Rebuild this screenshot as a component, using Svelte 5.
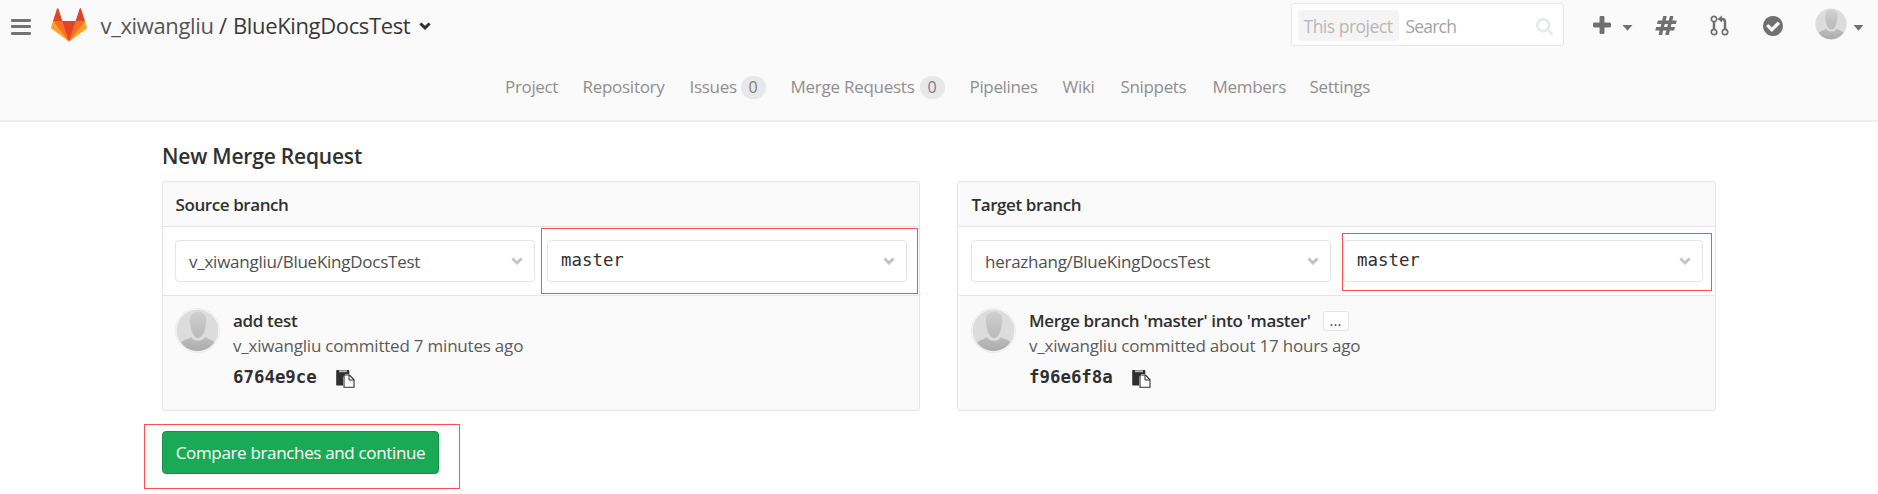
<script>
  const nav = [
    { label: 'Project', w: 52.5, ls: -0.34 },
    { label: 'Repository', w: 82, ls: -0.28 },
    { label: 'Issues', w: 46, ls: -0.3, count: 0 },
    { label: 'Merge Requests', w: 124, ls: -0.26, count: 0 },
    { label: 'Pipelines', w: 68, ls: -0.34 },
    { label: 'Wiki', w: 33, ls: -0.3 },
    { label: 'Snippets', w: 67, ls: -0.34 },
    { label: 'Members', w: 72, ls: -0.3 },
    { label: 'Settings', w: 62, ls: -0.32 }
  ];

  const panels = [
    {
      title: 'Source branch', project: 'v_xiwangliu/BlueKingDocsTest', branch: 'master',
      commit: 'add test', expandable: false, meta: 'v_xiwangliu committed 7 minutes ago',
      sha: '6764e9ce', mark: 'mark-source'
    },
    {
      title: 'Target branch', project: 'herazhang/BlueKingDocsTest', branch: 'master',
      commit: "Merge branch 'master' into 'master'", expandable: true,
      meta: 'v_xiwangliu committed about 17 hours ago', sha: 'f96e6f8a', mark: 'mark-target'
    }
  ];
</script>

{#snippet person()}
  <svg class="person" viewBox="0 0 40 40">
    <defs>
      <clipPath id="round"><circle cx="20" cy="20" r="19" /></clipPath>
      <linearGradient id="head" x1="0" y1="0" x2="0" y2="1"><stop offset="0" stop-color="#cfcfcf" /><stop offset="1" stop-color="#b9b9b9" /></linearGradient>
      <linearGradient id="body" x1="0" y1="0" x2="0" y2="1"><stop offset="0" stop-color="#bdbdbd" /><stop offset="1" stop-color="#aaaaaa" /></linearGradient>
    </defs>
    <circle cx="20" cy="20" r="19.5" fill="#dcdcdc" />
    <g clip-path="url(#round)">
      <path fill="url(#body)" d="M4 32c2-3 7-4 10-6 1.500 2.500 3.500 3.500 6.500 3.500S25.500 28.500 27 26c3 2 8 3 10 6v8H4z" />
      <path fill="url(#head)" d="M20.500 2.500c5 0 7.600 3.300 7.600 8 0 7-2.800 16.500-7.600 16.500S12.900 17.500 12.900 10.500c0-4.700 2.600-8 7.600-8z" />
    </g>
  </svg>
{/snippet}

{#snippet chevron(cls)}
  <svg class={cls} viewBox="0 0 12 8"><path d="M1.400 1.500L6 5.900l4.600-4.400" fill="none" stroke="currentColor" stroke-width="2.900" /></svg>
{/snippet}

{#snippet caret()}
  <svg class="caret" viewBox="0 0 11 6"><path d="M.5 0h10L5.500 5.800z" fill="currentColor" /></svg>
{/snippet}

<div class="page">
  <header>
    <div class="bar">
      <div class="burger"><i></i><i></i><i></i></div>
      <svg class="logo" viewBox="0 0 36 36">
        <path fill="#e24329" d="M2 14l9.380 9v-9l-4-12.280c-.205-.632-1.176-.632-1.380 0z" />
        <path fill="#e24329" d="M34 14l-9.380 9v-9l4-12.280c.205-.632 1.176-.632 1.380 0z" />
        <path fill="#e24329" d="M18 34.380L3 14h30z" />
        <path fill="#fc6d26" d="M18 34.380L11.380 14H2l4 11z" />
        <path fill="#fc6d26" d="M18 34.380L24.620 14H34l-4 11z" />
        <path fill="#fca326" d="M2 14L.1 20.160c-.18.565 0 1.200.5 1.560l17.420 12.660z" />
        <path fill="#fca326" d="M34 14l1.900 6.160c.18.565 0 1.200-.5 1.560L18 34.380z" />
      </svg>
      <div class="name"><span>v_xiwangliu</span> <em>/</em> BlueKingDocsTest</div>
      {@render chevron('name-chevron')}
      <div class="search">
        <span class="scope">This project</span>
        <span class="hint">Search</span>
        <svg viewBox="64 128 1664 1664"><path fill="currentColor" d="M1216 832q0-185-131.500-316.500t-316.500-131.500-316.500 131.500-131.500 316.500 131.500 316.500 316.500 131.500 316.500-131.500 131.500-316.500zm512 832q0 52-38 90t-90 38q-54 0-90-38l-343-342q-179 124-399 124-143 0-273.500-55.500t-225-150-150-225-55.500-273.500 55.500-273.500 150-225 225-150 273.500-55.500 273.500 55.500 225 150 150 225 55.500 273.500q0 220-124 399l343 343q37 37 37 90z" /></svg>
      </div>
      <svg class="plus" viewBox="192 128 1408 1408"><path fill="currentColor" d="M1600 736v192q0 40-28 68t-68 28h-416v416q0 40-28 68t-68 28h-192q-40 0-68-28t-28-68v-416h-416q-40 0-68-28t-28-68v-192q0-40 28-68t68-28h416v-416q0-40 28-68t68-28h192q40 0 68 28t28 68v416h416q40 0 68 28t28 68z" /></svg>
      {@render caret()}
      <svg class="hash" viewBox="0 128 1792 1536"><path fill="currentColor" d="M991 1024l64-256h-254l-64 256h254zm768-504l-56 224q-7 24-31 24h-327l-64 256h311q15 0 25 12 10 14 6 28l-56 224q-5 24-31 24h-327l-81 328q-7 24-31 24h-224q-16 0-26-12-9-12-6-28l78-312h-254l-81 328q-7 24-31 24h-225q-15 0-25-12-9-12-6-28l78-312h-311q-15 0-25-12-9-12-6-28l56-224q7-24 31-24h327l64-256h-311q-15 0-25-12-10-14-6-28l56-224q5-24 31-24h327l81-328q7-24 32-24h224q15 0 25 12 9 12 6 28l-78 312h254l81-328q7-24 32-24h224q15 0 25 12 9 12 6 28l-78 312h311q15 0 25 12 9 12 6 28z" /></svg>
      <svg class="merge" viewBox="0 0 19 21" fill="none" stroke="currentColor">
        <circle cx="4" cy="4" r="2.700" stroke-width="1.700" /><circle cx="4" cy="17" r="2.700" stroke-width="1.700" /><circle cx="15" cy="17" r="2.700" stroke-width="1.700" />
        <path stroke-width="2.500" d="M4 6.500v8M10.500 4H12q3 0 3 3v7.500" /><path d="M7.500 4L12 .5v7z" fill="currentColor" stroke="none" />
      </svg>
      <svg class="done" viewBox="128 128 1536 1536"><path fill="currentColor" d="M1412 734q0-28-18-46l-91-90q-19-19-45-19t-45 19l-408 407-226-226q-19-19-45-19t-45 19l-91 90q-18 18-18 46 0 27 18 45l362 362q19 19 45 19 27 0 46-19l543-543q18-18 18-45zm252 162q0 209-103 385.500t-279.500 279.500-385.500 103-385.500-103-279.500-279.500-103-385.500 103-385.500 279.500-279.500 385.500-103 385.500 103 279.500 279.500 103 385.500z" /></svg>
      <div class="me">{@render person()}</div>
      {@render caret()}
    </div>
    <nav>
      {#each nav as n}
        <div class="item">
          <span style="width:{n.w}px;letter-spacing:{n.ls}px">{n.label}</span>
          {#if n.count !== undefined}<b>{n.count}</b>{/if}
        </div>
      {/each}
    </nav>
  </header>

  <main>
    <h1>New Merge Request</h1>
    <div class="panels">
      {#each panels as p}
        <section>
          <h2>{p.title}</h2>
          <div class="pickers">
            <div class="select"><span>{p.project}</span>{@render chevron('chev')}</div>
            <div class="select mono"><span>{p.branch}</span>{@render chevron('chev')}</div>
            <div class="mark {p.mark}"></div>
          </div>
          <div class="commit">
            <div class="face">{@render person()}</div>
            <div class="info">
              <div class="msg">
                <span>{p.commit}</span>
                {#if p.expandable}<span class="more">...</span>{/if}
              </div>
              <div class="meta">{p.meta}</div>
              <div class="sha">
                <span>{p.sha}</span>
                <svg viewBox="0 0 19 19">
                  <path fill="currentColor" d="M1 1h11.500q.8 0 .8.800V5H9.500L7 8v8.500H1q-.8 0-.8-.8V1.800Q.2 1 1 1z" />
                  <path fill="#bbb" d="M3 1.300h8v1.900H3z" />
                  <path fill="#fff" stroke="currentColor" stroke-width="1.100" d="M8 6h5.500l4.500 4.800v7.400H8z" />
                  <path fill="none" stroke="currentColor" stroke-width="1" d="M13 6v5h5" />
                </svg>
              </div>
            </div>
          </div>
        </section>
      {/each}
    </div>
    <div class="actions">
      <button>Compare branches and continue</button>
      <div class="mark mark-button"></div>
    </div>
  </main>
</div>

<style>
  :global(body) { background: #fff; overflow: hidden; }
  * { box-sizing: border-box; }
  svg { display: block; flex: none; }
  .page { width: 1878px; height: 494px; font: 17px 'Open Sans', 'Noto Sans', sans-serif; color: #303030; white-space: nowrap; }
  header { height: 122px; background: #fafafa; border-bottom: 2px solid #eee; }
  .bar { height: 52px; display: flex; align-items: center; color: #707070; }
  .burger { width: 20px; margin-left: 11px; margin-top: 1px; display: flex; flex-direction: column; gap: 3.5px; }
  .burger i { height: 3px; background: #757575; border-radius: 1px; }
  .logo { width: 36px; height: 36px; margin: -3px 0 0 19.500px; }
  .name { width: 310px; margin: -1px 0 0 14px; font-size: 22px; letter-spacing: -.36px; color: #383838; line-height: 51px; }
  .name span { color: #555; }
  .name em { font-style: normal; margin: 0 1px 0 0; }
  .name-chevron { width: 12px; height: 8px; margin-left: 8px; color: #303030; }
  .search { width: 273px; height: 43px; margin: -3px 0 0 860px; background: #fff; border: 1px solid #e7e7e7; border-radius: 3px; display: flex; align-items: center; padding-left: 6px; }
  .scope { width: 101px; height: 31px; margin-top: 2px; padding-left: 6px; background: #f4f4f4; border-radius: 3px; line-height: 32px; font-size: 17.500px; letter-spacing: -.5px; color: #b8b8b8; }
  .hint { width: 137px; padding: 3px 0 0 7px; font-size: 17.500px; letter-spacing: -.8px; color: #a4a4a4; }
  .search svg { width: 17px; height: 17px; margin-top: 4px; color: #e7e9ed; }
  .plus { width: 18px; height: 18px; margin: -2px 0 0 29px; }
  .caret { width: 11px; height: 6px; margin: 4px 0 0 11px; }
  .hash { width: 22px; height: 19px; margin: -1px 0 0 22px; }
  .merge { width: 19px; height: 21px; margin: -1px 0 0 33px; }
  .done { width: 20px; height: 20px; margin: -1px 0 0 34px; }
  .me { margin: -4px -5px 0 32px; width: 32px; height: 32px; }
  .person { width: 100%; height: 100%; }
  nav { display: flex; align-items: center; gap: 25px; height: 68px; padding: 1px 0 0 505px; color: #8f8f8f; line-height: 34px; }
  .item { display: flex; align-items: center; }
  .item b { width: 25px; height: 23px; margin: 1px 0 0 5px; border-radius: 12px; background: #e8e8e8; color: #7f7f7f; font-weight: 400; font-size: 16px; line-height: 23px; text-align: center; }
  main { padding: 17px 0 0 162px; }
  h1 { margin: 0; height: 42px; font-size: 21px; line-height: 34px; font-weight: 600; letter-spacing: -.2px; }
  .panels { display: flex; gap: 37px; }
  section { width: 758px; height: 230px; border: 1px solid #e5e5e5; border-radius: 3px; background: #fafafa; }
  section:last-child { width: 759px; padding: 0 1px; }
  h2 { margin: 0; height: 45px; padding: 0 0 0 12.500px; font-size: 17px; line-height: 46px; font-weight: 600; letter-spacing: -.41px; border-bottom: 1px solid #e5e5e5; }
  .pickers { position: relative; height: 69px; padding: 13px 12px; display: flex; gap: 12px; background: #fff; border-bottom: 1px solid #e5e5e5; }
  .select { flex: none; width: 360px; height: 42px; padding: 0 11px 0 13px; display: flex; align-items: center; justify-content: space-between; border: 1px solid #e5e5e5; border-radius: 4px; letter-spacing: -.25px; color: #505050; }
  .select.mono { font-family: 'DejaVu Sans Mono', monospace; font-size: 17.400px; letter-spacing: 0; color: #303030; }
  .mono span { margin-top: -3px; }
  .chev { width: 12px; height: 8px; color: #c4c4c4; }
  .mark { position: absolute; border: 1px solid #fb5050; }
  .mark-source { left: 378px; top: 1px; width: 377px; height: 66px; }
  .mark-target { left: 383px; top: 6px; width: 370px; height: 58px; }
  .mark-button { left: -18px; top: -7px; width: 316px; height: 65px; }
  .commit { display: flex; padding: 12px 0 0 12px; }
  .face { width: 45px; height: 45px; border: 1px solid #ececec; border-radius: 50%; }
  .info { margin-left: 13px; }
  .msg { display: flex; align-items: center; height: 25px; line-height: 25px; font-weight: 600; letter-spacing: -.33px; }
  .more { width: 26px; height: 20px; margin: 1px 0 0 12px; border: 1px solid #e5e5e5; border-radius: 3px; background: #fff; font-size: 15px; font-weight: 400; line-height: 17px; text-align: center; letter-spacing: 0; color: #444; }
  .meta { height: 25px; line-height: 25px; letter-spacing: -.21px; color: #5c5c5c; }
  .sha { display: flex; align-items: center; height: 38px; font: bold 17.400px/37px 'DejaVu Sans Mono', monospace; }
  .sha svg { width: 19px; height: 19px; margin: 2px 0 0 19px; }
  .actions { position: relative; margin-top: 20px; width: 277px; }
  button { display: block; width: 277px; height: 43px; padding: 0 0 1px; border: 1px solid #168f48; border-radius: 4px; background: #1aaa55; color: #fff; font: 17px 'Open Sans', 'Noto Sans', sans-serif; letter-spacing: -.34px; }
</style>
